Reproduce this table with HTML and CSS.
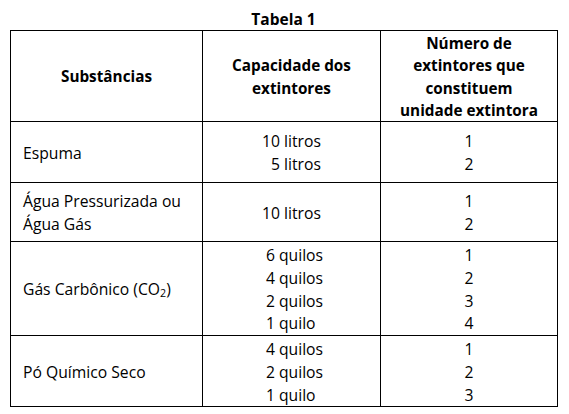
FILE: index.html
```html
<!DOCTYPE html>
<html lang="pt">
<head>
<meta charset="utf-8">
<title>Tabela 1</title>
<link rel="stylesheet" href="styles.css">
</head>
<body>
<div class="page">
  <div class="title">Tabela 1</div>
  <table class="tbl">
    <colgroup>
      <col class="c1">
      <col class="c2">
      <col class="c3">
    </colgroup>
    <thead>
      <tr class="r-head">
        <th>Substâncias</th>
        <th>Capacidade dos<br>extintores</th>
        <th>Número de<br>extintores que<br>constituem<br>unidade extintora</th>
      </tr>
    </thead>
    <tbody>
      <tr class="r-espuma">
        <td class="name">Espuma</td>
        <td class="cap"><div class="list list-right"><div>10 litros</div><div>5 litros</div></div></td>
        <td class="num"><div>1</div><div>2</div></td>
      </tr>
      <tr class="r-agua">
        <td class="name">Água Pressurizada ou<br>Água Gás</td>
        <td class="cap"><div class="list list-right"><div>10 litros</div></div></td>
        <td class="num"><div>1</div><div>2</div></td>
      </tr>
      <tr class="r-gas">
        <td class="name">Gás Carbônico (CO<sub class="sub">2</sub>)</td>
        <td class="cap"><div class="list list-left"><div>6 quilos</div><div>4 quilos</div><div>2 quilos</div><div>1 quilo</div></div></td>
        <td class="num"><div>1</div><div>2</div><div>3</div><div>4</div></td>
      </tr>
      <tr class="r-po">
        <td class="name">Pó Químico Seco</td>
        <td class="cap"><div class="list list-left"><div>4 quilos</div><div>2 quilos</div><div>1 quilo</div></div></td>
        <td class="num"><div>1</div><div>2</div><div>3</div></td>
      </tr>
    </tbody>
  </table>
</div>
</body>
</html>
```

FILE: styles.css
```css
html, body {
  margin: 0;
  padding: 0;
  background: #ffffff;
}

body {
  font-family: "Open Sans", "DejaVu Sans", sans-serif;
  font-size: 15.7px;
  line-height: 22.7px;
  color: #000000;
}

.page {
  padding: 8px 0 0 10px;
  width: 547px;
}

.title {
  font-weight: 700;
  font-size: 15.5px;
  line-height: 22px;
  text-align: center;
}

.tbl {
  border-collapse: collapse;
  table-layout: fixed;
  width: 547px;
}

.c1 { width: 192px; }
.c2 { width: 178px; }
.c3 { width: 177px; }

.tbl th,
.tbl td {
  border: 1px solid #000000;
  padding: 2px 0 0 0;
  vertical-align: middle;
}

.tbl th {
  font-weight: 700;
  font-size: 15.3px;
  line-height: 22.3px;
  padding: 1px 0 0 0;
  text-align: center;
}

.r-head { height: 90px; }
.r-espuma { height: 61px; }
.r-agua { height: 59px; }
.r-gas { height: 94px; }
.r-po { height: 69px; }

.name {
  text-align: left;
  padding-left: 12px !important;
}

.cap {
  text-align: center;
}

.list {
  display: inline-block;
}

.list-right {
  text-align: right;
}

.list-left {
  text-align: left;
  padding-left: 6px;
}

.num {
  text-align: center;
}

.sub {
  font-size: 0.68em;
  line-height: 0;
  vertical-align: -0.2em;
}
```
